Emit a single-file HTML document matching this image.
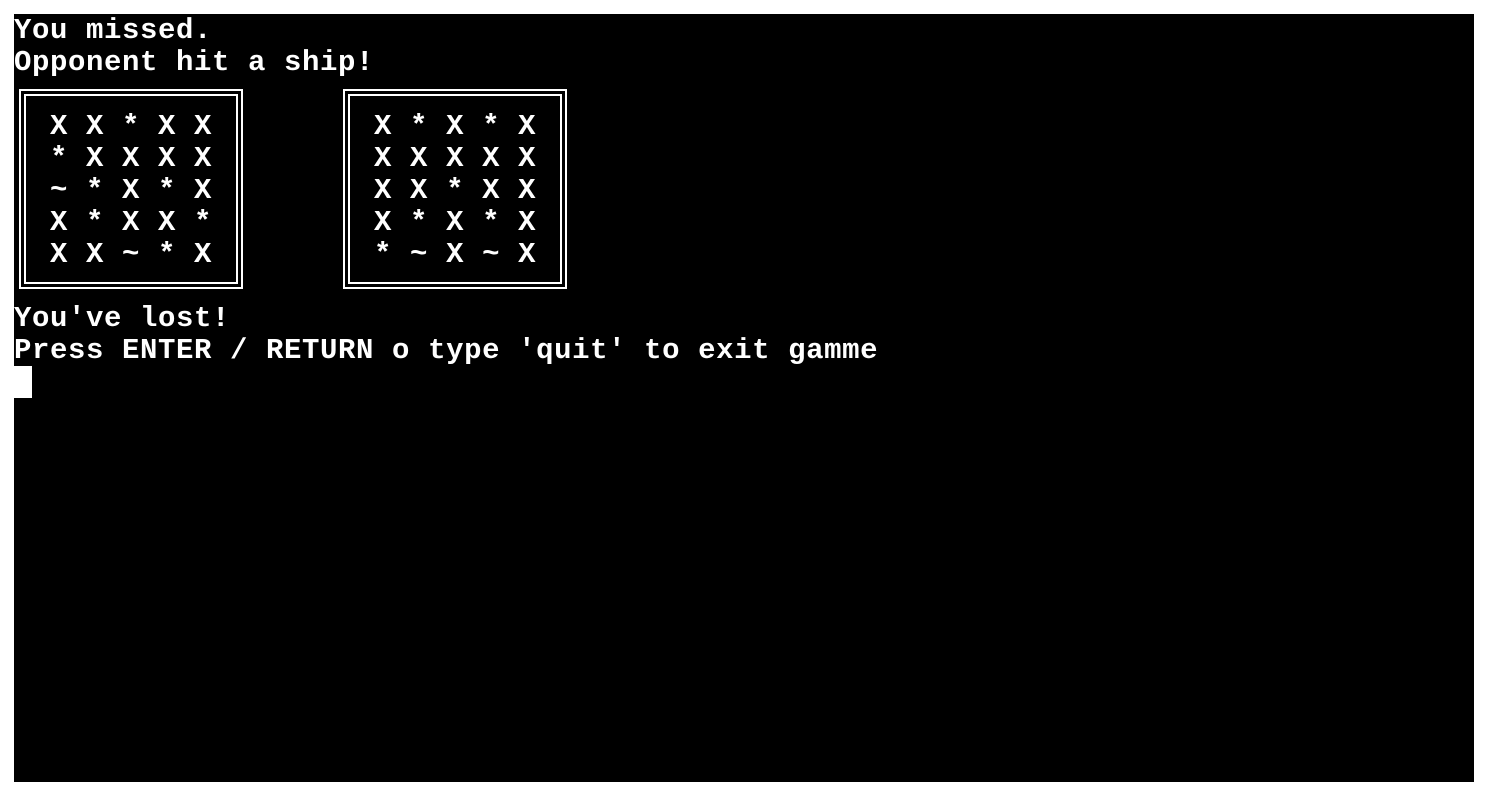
<!DOCTYPE html>
<html><head><style>
html,body{margin:0;padding:0;background:#fff;width:1488px;height:794px;overflow:hidden}
#t{position:absolute;left:14px;top:14px;width:1460px;height:768px;background:#000}
pre{position:absolute;left:14px;top:15px;margin:0;font:bold 29px/32px "Liberation Mono",monospace;color:#fff;white-space:pre;letter-spacing:0.6px}
.b{position:absolute;border:7px double #fff;box-sizing:border-box}
.c{position:absolute;left:14px;top:366px;width:18px;height:32px;background:#fff}
</style></head><body>
<div id="t"></div>
<div class="b" style="left:19px;top:89px;width:224px;height:200px"></div>
<div class="b" style="left:343px;top:89px;width:224px;height:200px"></div>
<pre>You missed.
Opponent hit a ship!

  X X * X X         X * X * X
  * X X X X         X X X X X
  ~ * X * X         X X * X X
  X * X X *         X * X * X
  X X ~ * X         * ~ X ~ X

You've lost!
Press ENTER / RETURN o type 'quit' to exit gamme</pre>
<div class="c"></div>
</body></html>
